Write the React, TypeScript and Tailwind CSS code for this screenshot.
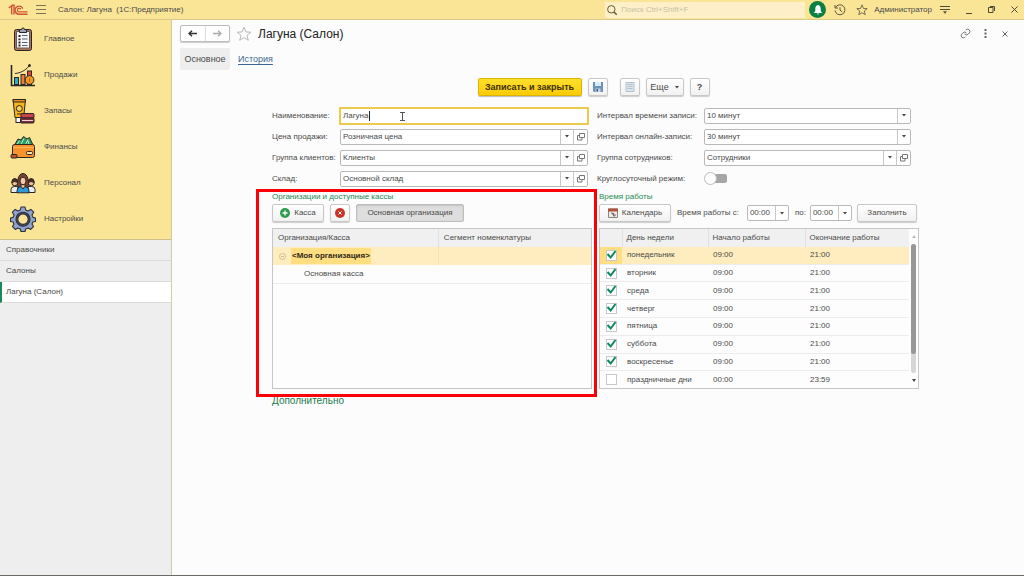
import type { ReactNode } from "react"
import { useState } from "react"
import clsx from "clsx"

const days = [
  { name: "понедельник", from: "09:00", to: "21:00", on: true },
  { name: "вторник", from: "09:00", to: "21:00", on: true },
  { name: "среда", from: "09:00", to: "21:00", on: true },
  { name: "четверг", from: "09:00", to: "21:00", on: true },
  { name: "пятница", from: "09:00", to: "21:00", on: true },
  { name: "суббота", from: "09:00", to: "21:00", on: true },
  { name: "воскресенье", from: "09:00", to: "21:00", on: true },
  { name: "праздничные дни", from: "00:00", to: "23:59", on: false },
]

function Logo() {
  return (
    <svg viewBox="0 0 20 12" className="h-3 w-5" fill="none" stroke="#cf5436">
      <path d="M.8 4 3.700 1.700V10.500M6 10.500V1.200H4" strokeWidth="1.400" />
      <path d="M14.800 4.600A4 4 0 1 0 11.500 10.200H19.500" strokeWidth="1.400" />
      <path d="M12.900 5.300A1.800 1.800 0 1 0 11.500 7.900H19.500" strokeWidth="1.200" />
    </svg>
  )
}

function ClipboardIcon() {
  return (
    <svg viewBox="0 0 24 24" className="h-6 w-6" stroke="#2b2626" strokeWidth="1">
      <rect x="3.500" y="2.500" width="17" height="21" rx="2" fill="#a9755a" />
      <rect x="5.500" y="4.500" width="13" height="16.500" fill="#f4f6fa" stroke="#6b5a55" />
      <path d="M8.500 5.500v-3h2a1.500 1.500 0 0 1 3 0h2v3z" fill="#9aa4b4" />
      <path d="M7.500 9h2M7.500 12.300h2M7.500 15.500h2M7.500 18.500h2" strokeWidth="1.800" />
      <path d="M11 8.500h5.500M11 12h5.500M11 15.500h5.500M11 18.500h5.500" stroke="#5a6070" />
    </svg>
  )
}

function ChartIcon() {
  return (
    <svg viewBox="0 0 26 24" className="h-6 w-[26px]" stroke="#2b2626" strokeWidth="1">
      <path d="M1.500 2v20.500H25" fill="none" strokeWidth="1.600" />
      <rect x="4.500" y="14.500" width="4" height="7" fill="#27b1cf" />
      <rect x="11" y="11.500" width="4" height="10" fill="#ef7b3a" />
      <rect x="17.500" y="8" width="4" height="13.500" fill="#e8452f" />
      <circle cx="19.500" cy="17" r="4.400" fill="#f59a23" />
      <path d="M19.500 14.800v4.400" stroke="#c2611a" />
      <path d="M5 10.500c5-.5 10-2.500 14-7.500" fill="none" />
      <circle cx="19.500" cy="2.500" r="1" fill="#2b2626" />
    </svg>
  )
}

function StockIcon() {
  return (
    <svg viewBox="0 0 24 26" className="h-[26px] w-6" stroke="#2b2626" strokeWidth="1">
      <path d="M2 1.500h12.500l-1.800 18H4z" fill="#f9b31c" />
      <path d="M2 1.500h12.500l-.3 2.500H2.300z" fill="#e58f17" />
      <circle cx="8.300" cy="10.500" r="3" fill="#f9d066" />
      <path d="M6 16h4.500" />
      <rect x="5" y="19.500" width="7" height="5" fill="#fff" />
      <rect x="10" y="15.500" width="13" height="4.500" rx="1" fill="#c8414b" />
      <rect x="9.500" y="20" width="13.500" height="5" rx="1" fill="#7e2b3b" />
      <path d="M11 22.500h11" stroke="#f0d5d5" />
    </svg>
  )
}

function WalletIcon() {
  return (
    <svg viewBox="0 0 26 24" className="h-6 w-[26px]" stroke="#2b2626" strokeWidth="1">
      <path d="M4.500 10 8 4l3 1 2.500-3.500L17 4l2.500-1.500L23 10z" fill="#2e9e63" />
      <path d="m7 9.500 2.500-4M11 9.500l3-6M15.500 9.500l2.500-5M19 9.500l-1-4" stroke="#bfe8cf" />
      <rect x="2.500" y="9.500" width="22" height="13" rx="2" fill="#f7922c" />
      <path d="M3 12.500h21" stroke="#ffb45c" />
      <rect x="16.500" y="16.500" width="6" height="3" rx="1" fill="#ffe0a8" />
      <rect x="1" y="19.500" width="6" height="3.500" rx="1" fill="#c4552b" />
    </svg>
  )
}

function StaffIcon() {
  return (
    <svg viewBox="0 0 26 22" className="h-[22px] w-[26px]" stroke="#2b2626" strokeWidth="1">
      <path d="M1 20.500v-3q0-3 3.500-3h3.500v6zM25 20.500v-3q0-3-3.500-3H18v6z" fill="#e9eef5" />
      <circle cx="4.800" cy="10.800" r="3" fill="#f4bd93" />
      <circle cx="21.200" cy="10.800" r="3" fill="#f4bd93" />
      <path d="M1.800 10.500q0-4 3-4t3 4q-3-2-6 0zM18.200 10.500q0-4 3-4t3 4q-3-2-6 0z" fill="#4a2c22" />
      <path d="M8 15.500C7 11 7.500 1.500 13 1.500s6 9.500 5 14z" fill="#7b4330" />
      <path d="M7 20.800v-2q0-4 4-4.300h4q4 .3 4 4.300v2z" fill="#2b9ad6" />
      <path d="M11 14.300l2 2.700 2-2.700v-2h-4z" fill="#f4bd93" />
      <ellipse cx="13" cy="9" rx="3" ry="3.800" fill="#f7c9a3" />
    </svg>
  )
}

function GearIcon() {
  return (
    <svg viewBox="0 0 26 26" className="h-[26px] w-[26px]" stroke="#2b2f3a" strokeWidth="1.100" strokeLinejoin="round">
      <path
        d="M11 1h4l.7 3 2.500 1 2.700-1.600 2.800 2.800L22 9l1 2.400 2.500.6v3.500L22.800 16 22 18l1.500 2.600-2.800 2.800L18.200 22l-2.500 1-.7 2.500h-4L10.300 23l-2.500-1-2.500 1.400-2.800-2.800L4 18l-.9-2L.5 15.500V12l2.600-.6L4 9 2.400 6.200l2.800-2.800L7.800 5l2.500-1z"
        fill="#8fa3cc"
      />
      <circle cx="13" cy="13.200" r="7" fill="#4c5160" />
      <circle cx="13" cy="13.200" r="5.200" fill="#fae597" />
    </svg>
  )
}

function StarIcon({ className }: { className: string }) {
  return (
    <svg viewBox="0 0 16 16" className={className} fill="none" stroke="currentColor">
      <path d="m8 1.200 1.900 4.700 5 .3-3.900 3.200 1.300 4.900L8 11.600l-4.300 2.700L5 9.400 1.100 6.200l5-.3z" />
    </svg>
  )
}

function Arrow() {
  return (
    <svg viewBox="0 0 4 3" className="h-[3px] w-1" fill="#444">
      <path d="M0 0h4L2 2.500z" />
    </svg>
  )
}

function OpenIcon() {
  return (
    <svg viewBox="0 0 8 8" className="h-2 w-2" fill="none" stroke="#777">
      <path d="M2.500.5h5v4h-5zM2.500 2.500h-2v4.500h4.500v-2.500" />
    </svg>
  )
}

const menu: { label: string; icon: ReactNode }[] = [
  { label: "Главное", icon: <ClipboardIcon /> },
  { label: "Продажи", icon: <ChartIcon /> },
  { label: "Запасы", icon: <StockIcon /> },
  { label: "Финансы", icon: <WalletIcon /> },
  { label: "Персонал", icon: <StaffIcon /> },
  { label: "Настройки", icon: <GearIcon /> },
]

const btn =
  "flex h-[18px] items-center justify-center rounded-xs border border-[#c8c8c8] bg-gradient-to-b from-white to-[#f1f1f1] shadow-[0_1px_1px_#cccccc]"

function Combo({ id, value, open, className }: { id: string; value: string; open?: boolean; className?: string }) {
  return (
    <div className={clsx("flex h-4 rounded-xs border border-[#b9b9b9] bg-white", className)}>
      <div className="grid min-w-0 flex-1 grid-cols-[1fr_13px]">
        <select
          id={id}
          defaultValue={value}
          className="col-span-2 col-start-1 row-start-1 w-full appearance-none bg-transparent pl-0.5 outline-none"
        >
          <option>{value}</option>
        </select>
        <span className="pointer-events-none col-start-2 row-start-1 grid place-items-center border-l border-[#c8c8c8]">
          <Arrow />
        </span>
      </div>
      {open && (
        <button aria-label="Открыть" className="grid w-[14px] place-items-center border-l border-[#c8c8c8]">
          <OpenIcon />
        </button>
      )}
    </div>
  )
}

function Row({ id, label, children }: { id: string; label: string; children: ReactNode }) {
  return (
    <>
      <label htmlFor={id} className="whitespace-nowrap">
        {label}
      </label>
      {children}
    </>
  )
}

function TitleBar() {
  return (
    <header className="flex h-5 items-center border-b border-[#d9c98a] bg-[#fae597] pl-2 pr-1.5">
      <Logo />
      <button aria-label="Меню" className="ml-2">
        <svg viewBox="0 0 10 9" className="h-[9px] w-2.5" stroke="#7d744f">
          <path d="M0 .5h10M0 4.500h10M0 8.500h10" />
        </svg>
      </button>
      <span className="ml-3 whitespace-pre">{"Салон: Лагуна  (1С:Предприятие)"}</span>
      <label className="ml-auto flex h-4 w-[200px] items-center gap-1 bg-[#fdf0c8] pl-0.5">
        <svg viewBox="0 0 10 10" className="h-2.5 w-2.5" fill="none" stroke="#5d573f">
          <circle cx="4.300" cy="4.300" r="3.700" />
          <path d="m7 7 2.800 2.800" strokeWidth="1.500" />
        </svg>
        <input
          aria-label="Поиск"
          placeholder="Поиск Ctrl+Shift+F"
          className="min-w-0 flex-1 bg-transparent outline-none placeholder:text-[#c9bf9f]"
        />
      </label>
      <button aria-label="Уведомления" className="ml-1 grid h-[17px] w-[17px] place-items-center rounded-full bg-[#0b8043]">
        <svg viewBox="0 0 10 10" className="h-2.5 w-2.5" fill="#fff">
          <path d="M5 0C3 .6 2.300 2 2.300 4v2L.8 8h8.400L7.700 6V4C7.700 2 7 .6 5 0zM4 8.500h2a1 1 0 0 1-2 0z" />
        </svg>
      </button>
      <button aria-label="История" className="ml-2">
        <svg viewBox="0 0 12 12" className="h-3 w-3" fill="none" stroke="#5d573f">
          <path d="M1.500 3.500A5 5 0 1 1 1 6.500M1 1v3h3M6 3.200v3l2.200 1.600" />
        </svg>
      </button>
      <button aria-label="Избранное" className="ml-2.5 text-[#4f4a38]">
        <StarIcon className="h-3 w-3" />
      </button>
      <button className="ml-1.5">Администратор</button>
      <button aria-label="Настройка" className="ml-2">
        <svg viewBox="0 0 10 9" className="h-[9px] w-2.5" stroke="#4f4a38">
          <path d="M0 1.500h10M0 4.500h10" />
          <path d="M3.500 6.500h3L5 8.500z" fill="#4f4a38" strokeWidth=".5" />
        </svg>
      </button>
      <button aria-label="Свернуть" className="ml-4 h-2 w-1.5 border-b border-[#4f4a38]" />
      <button aria-label="Развернуть" className="ml-4">
        <svg viewBox="0 0 7 7" className="h-[7px] w-[7px]" fill="none" stroke="#4f4a38">
          <path d="M.5 1.500h4.500v5H.5zM2 .5h4.500v4.500" />
        </svg>
      </button>
      <button aria-label="Закрыть" className="ml-4">
        <svg viewBox="0 0 7 7" className="h-[7px] w-[7px]" stroke="#4f4a38">
          <path d="m.5.5 6 6m0-6-6 6" />
        </svg>
      </button>
    </header>
  )
}

function Sidebar() {
  return (
    <aside className="flex w-[172px] shrink-0 flex-col border-r border-[#cfcaa8] bg-[#eeeeee]">
      <nav className="border-b border-[#cfc08a] bg-[#fae597] pb-0.5 pt-px">
        {menu.map((item) => (
          <a key={item.label} href="#" className="flex h-9 items-center gap-2 pl-2.5">
            <span className="grid w-[26px] place-items-center">{item.icon}</span>
            {item.label}
          </a>
        ))}
      </nav>
      <a href="#" className="flex h-[21px] items-center border-b border-[#dddddd] pl-1.5">
        Справочники
      </a>
      <a href="#" className="flex h-[21px] items-center border-b border-[#dddddd] pl-1.5">
        Салоны
      </a>
      <a href="#" className="flex h-[21px] items-center border-b border-l-2 border-b-[#dddddd] border-l-[#1b8a5a] bg-white pl-1">
        Лагуна (Салон)
      </a>
    </aside>
  )
}

function CashDesks() {
  return (
    <section className="relative">
      <h2 className="h-3 leading-3 text-[#1c8a55]">Организации и доступные кассы</h2>
      <div className="flex h-5 items-center gap-1.5">
        <button className={clsx(btn, "w-[52px] gap-1")}>
          <svg viewBox="0 0 10 10" className="h-2.5 w-2.5" stroke="#fff">
            <circle cx="5" cy="5" r="5" fill="#2f9b4e" stroke="none" />
            <path d="M5 2.500v5M2.500 5h5" strokeWidth="1.300" />
          </svg>
          Касса
        </button>
        <button aria-label="Удалить" className={clsx(btn, "w-5")}>
          <svg viewBox="0 0 10 10" className="h-2.5 w-2.5" stroke="#fff">
            <circle cx="5" cy="5" r="5" fill="#cc3328" stroke="none" />
            <path d="m3.500 3.500 3 3m0-3-3 3" />
          </svg>
        </button>
        <button className="h-[18px] w-[108px] rounded-xs border border-[#bdbdbd] bg-[#dedede] shadow-[inset_0_1px_2px_#c4c4c4]">
          Основная организация
        </button>
      </div>
      <div className="mt-[5px] h-[161px] border border-[#c6c6c6] bg-[#fdfdfd]">
        <table className="w-full table-fixed border-collapse text-left">
          <thead>
            <tr className="h-[18px] bg-[#f0f0f0]">
              <th className="w-[52%] border-r border-[#e0e0e0] pl-[5px] font-normal">Организация/Касса</th>
              <th className="pl-[5px] font-normal">Сегмент номенклатуры</th>
            </tr>
          </thead>
          <tbody>
            <tr className="h-[18px] bg-[#ffedbf]">
              <td className="border-r border-[#f7e3ae] pl-1.5">
                <div className="flex items-center gap-[5px]">
                  <svg viewBox="0 0 7 7" className="h-[7px] w-[7px]" fill="none" stroke="#d2bf8c">
                    <circle cx="3.500" cy="3.500" r="3" />
                    <path d="M2 3.500h3" />
                  </svg>
                  <span className="bg-[#ffdf82] px-px font-bold leading-4 text-[#2f2a1c]">&lt;Моя организация&gt;</span>
                </div>
              </td>
              <td />
            </tr>
            <tr className="h-[18px] border-b border-[#ececec]">
              <td className="pl-[31px]">Основная касса</td>
              <td />
            </tr>
          </tbody>
        </table>
      </div>
      {/* attention frame */}
      <div className="pointer-events-none absolute -bottom-2 -left-4 -right-[5px] -top-0.5 border-3 border-[#fb0007]" />
    </section>
  )
}

function WorkingHours() {
  const [checked, setChecked] = useState(days.map((d) => d.on))

  return (
    <section>
      <h2 className="h-3 leading-3 text-[#1c8a55]">Время работы</h2>
      <div className="flex h-5 items-center">
        <button className={clsx(btn, "w-[72px] gap-1")}>
          <svg viewBox="0 0 10 10" className="h-2.5 w-2.5">
            <path d="M.5 1h9v8.500h-9z" fill="#eeeae6" stroke="#8d8580" />
            <path d="M0 .5h10V3.500H0z" fill="#b0503d" />
            <path d="M3 5h1.500v1.500M5.500 5v3H7V6" fill="none" stroke="#6b6b6b" />
          </svg>
          Календарь
        </button>
        <label htmlFor="from" className="ml-1.5 mr-2 whitespace-nowrap">
          Время работы с:
        </label>
        <Combo id="from" value="00:00" className="w-[42px]" />
        <label htmlFor="to" className="ml-1.5 mr-1">
          по:
        </label>
        <Combo id="to" value="00:00" className="w-[42px]" />
        <button className={clsx(btn, "ml-auto mr-0.5 w-[60px]")}>Заполнить</button>
      </div>
      <div className="mt-[5px] flex h-[161px] border border-[#c6c6c6] bg-[#fdfdfd]">
        <table className="h-full flex-1 table-fixed border-collapse text-left">
          <thead>
            <tr className="h-[18px] bg-[#f0f0f0]">
              <th className="w-[22px] border-r border-[#e0e0e0]" />
              <th className="w-[86px] border-r border-[#e0e0e0] pl-1 font-normal">День недели</th>
              <th className="w-[97px] border-r border-[#e0e0e0] pl-1 font-normal">Начало работы</th>
              <th className="pl-1 font-normal">Окончание работы</th>
            </tr>
          </thead>
          <tbody>
            {days.map((day, i) => (
              <tr key={day.name} className={clsx("border-b border-[#ececec] last:border-b-0", i === 0 && "bg-[#ffedbf]")}>
                <td className={clsx(i === 0 && "bg-[#ffdf82]")}>
                  <label className="mx-auto grid h-[11px] w-[11px]">
                    <input
                      type="checkbox"
                      aria-label={day.name}
                      checked={checked[i]}
                      onChange={() => setChecked(checked.map((c, j) => (j === i ? !c : c)))}
                      className="peer col-start-1 row-start-1 appearance-none border border-[#c8c8c8] bg-white"
                    />
                    <svg
                      viewBox="0 0 11 11"
                      className="invisible col-start-1 row-start-1 h-[11px] w-[11px] overflow-visible peer-checked:visible"
                      fill="none"
                      stroke="#0c8a5c"
                      strokeWidth="2"
                    >
                      <path d="m1.500 4 3.200 3.500 4.800-6.500" />
                    </svg>
                  </label>
                </td>
                <td className="pl-[5px]">{day.name}</td>
                <td className="pl-[5px]">{day.from}</td>
                <td className="pl-[5px]">{day.to}</td>
              </tr>
            ))}
          </tbody>
        </table>
        <div className="flex w-[9px] flex-col items-center justify-between py-1.5">
          <svg viewBox="0 0 4 3" className="h-[3px] w-1" fill="#bbb">
            <path d="M0 3h4L2 0z" />
          </svg>
          <div className="my-1.5 w-[5px] flex-1 rounded-full bg-[#d6d6d6]">
            <div className="h-[85%] rounded-full bg-[#979797]" />
          </div>
          <svg viewBox="0 0 4 3" className="h-[3px] w-1" fill="#444">
            <path d="M0 0h4L2 3z" />
          </svg>
        </div>
      </div>
    </section>
  )
}

export default function App() {
  return (
    <div className="flex min-h-screen flex-col border-b border-[#6b6b66] bg-[#fcfcfc] font-['Liberation_Sans',Arial,sans-serif] text-[8px] leading-3 text-[#4a4a4a]">
      <TitleBar />
      <div className="flex flex-1">
        <Sidebar />
        <main className="min-w-0 flex-1">
          <div className="flex items-center pl-2 pr-4 pt-[5px]">
            <div className="flex h-[17px] w-[50px] rounded-xs border border-[#bdbdbd] bg-white shadow-[0_1px_1px_#cccccc]">
              <button aria-label="Назад" className="grid flex-1 place-items-center border-r border-[#dddddd]">
                <svg viewBox="0 0 9 7" className="h-[7px] w-[9px]" fill="none" stroke="#333" strokeWidth="1.500">
                  <path d="M9 3.500H1M4 .7 1 3.500l3 2.800" />
                </svg>
              </button>
              <button aria-label="Вперед" className="grid flex-1 place-items-center">
                <svg viewBox="0 0 9 7" className="h-[7px] w-[9px]" fill="none" stroke="#aaa" strokeWidth="1.300">
                  <path d="M0 3.500h8M5 .7l3 2.800-3 2.800" />
                </svg>
              </button>
            </div>
            <button aria-label="В избранное" className="ml-1.5 text-[#b9b9b9]">
              <StarIcon className="h-4 w-4" />
            </button>
            <h1 className="ml-1.5 text-xs text-[#222222]">Лагуна (Салон)</h1>
            <div className="ml-auto flex items-center gap-[13px] text-[#666666]">
              <button aria-label="Ссылка">
                <svg viewBox="0 0 24 24" className="h-[11px] w-[11px]" fill="none" stroke="currentColor" strokeWidth="2">
                  <path d="M10 13a5 5 0 0 0 7.500.5l3-3a5 5 0 0 0-7-7L12 5" />
                  <path d="M14 11a5 5 0 0 0-7.500-.5l-3 3a5 5 0 0 0 7 7L12 19" />
                </svg>
              </button>
              <button aria-label="Еще действия">
                <svg viewBox="0 0 3 9" className="h-[9px] w-[3px]" fill="currentColor">
                  <path d="M.5 0h2v2h-2zM.5 3.500h2v2h-2zM.5 7h2v2h-2z" />
                </svg>
              </button>
              <button aria-label="Закрыть форму" className="ml-0.5">
                <svg viewBox="0 0 6 6" className="h-1.5 w-1.5" stroke="currentColor">
                  <path d="m.5.5 5 5m0-5-5 5" />
                </svg>
              </button>
            </div>
          </div>

          <div className="mt-1.5 flex items-center gap-2 pl-2 text-[9px]">
            <button className="h-[22px] w-[50px] rounded-xs bg-[#eeeeee]">Основное</button>
            <a href="#" className="text-[#3f6793] underline underline-offset-2">
              История
            </a>
          </div>

          <div className="pl-[100px] pr-[105px]">
            <div className="mt-2 flex justify-center gap-1.5 pr-1">
              <button className="h-[18px] w-[104px] rounded-xs border border-[#d9b400] bg-gradient-to-b from-[#ffe02a] to-[#fccb00] text-[9px] font-bold text-[#3a3000] shadow-[0_1px_1px_#bbbbbb]">
                Записать и закрыть
              </button>
              <button aria-label="Записать" className={clsx(btn, "mr-1.5 w-5")}>
                <svg viewBox="0 0 10 10" className="h-2.5 w-2.5">
                  <path d="M0 0h10v10H1L0 9z" fill="#6b94bd" />
                  <path d="M2 0h6v4H2z" fill="#dcebf7" />
                  <path d="M2.500 6.500h5V10h-5z" fill="#c5d4e2" />
                  <path d="M3.500 7h1.500v2.500H3.500z" fill="#456" />
                </svg>
              </button>
              <button aria-label="Журнал" className={clsx(btn, "w-5")}>
                <svg viewBox="0 0 10 10" className="h-2.5 w-2.5" stroke="#b4c2cf" fill="#dde5ec">
                  <path d="M1 .5h8v9H1zM2.500 2.500h5M2.500 4.500h5M2.500 6.500h5" />
                </svg>
              </button>
              <button className={clsx(btn, "w-[38px] gap-1.5 text-[9px]")}>
                Еще
                <Arrow />
              </button>
              <button aria-label="Справка" className={clsx(btn, "w-5 text-[9px] font-bold")}>
                ?
              </button>
            </div>

            <div className="mt-[9px] grid grid-cols-[317fr_314fr] gap-2 pr-2">
              <div className="grid auto-rows-[21px] grid-cols-[68px_1fr] items-center pr-px">
                <Row id="name" label="Наименование:">
                  <div className="relative -mx-px">
                    <input
                      id="name"
                      defaultValue="Лагуна"
                      className="block h-[18px] w-full border-2 border-[#eacb50] bg-white pl-0.5 outline-none"
                    />
                    {/* text caret and mouse pointer */}
                    <span className="pointer-events-none absolute left-[30px] top-1 h-2.5 w-px bg-[#222222]" />
                    <svg
                      viewBox="0 0 5 9"
                      className="pointer-events-none absolute left-[61px] top-[5px] h-[9px] w-[5px]"
                      fill="none"
                      stroke="#555"
                    >
                      <path d="M0 .5h5M2.500.5v8M0 8.500h5" />
                    </svg>
                  </div>
                </Row>
                <Row id="price" label="Цена продажи:">
                  <Combo id="price" value="Розничная цена" open />
                </Row>
                <Row id="clients" label="Группа клиентов:">
                  <Combo id="clients" value="Клиенты" open />
                </Row>
                <Row id="store" label="Склад:">
                  <Combo id="store" value="Основной склад" open />
                </Row>
              </div>
              <div className="grid auto-rows-[21px] grid-cols-[107px_1fr] items-center">
                <Row id="interval" label="Интервал времени записи:">
                  <Combo id="interval" value="10 минут" />
                </Row>
                <Row id="online" label="Интервал онлайн-записи:">
                  <Combo id="online" value="30 минут" />
                </Row>
                <Row id="staff" label="Группа сотрудников:">
                  <Combo id="staff" value="Сотрудники" open />
                </Row>
                <Row id="allday" label="Круглосуточный режим:">
                  <label className="flex w-6 items-center">
                    <input id="allday" type="checkbox" role="switch" className="peer sr-only" />
                    <span className="z-10 h-[13px] w-[13px] rounded-full border border-[#bbbbbb] bg-white peer-checked:translate-x-2.5" />
                    <span className="-ml-1.5 h-[9px] w-4 rounded-r-xs bg-[#a6a6a6] peer-checked:bg-[#1c8a55]" />
                  </label>
                </Row>
              </div>
            </div>

            <div className="mt-0.5 grid grid-cols-2 gap-[7px]">
              <CashDesks />
              <WorkingHours />
            </div>

            <button className="mt-1.5 block text-[10px] text-[#1c7a4d]">Дополнительно</button>
          </div>
        </main>
      </div>
    </div>
  )
}
